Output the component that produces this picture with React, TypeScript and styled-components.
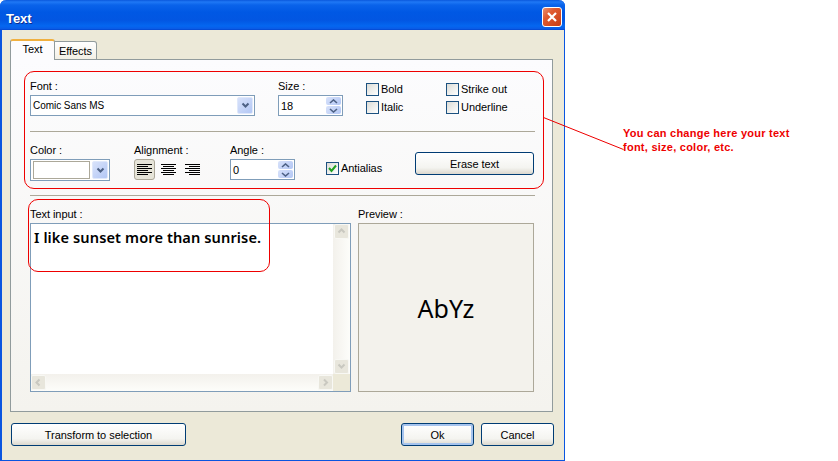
import React from 'react';
import styled, { createGlobalStyle } from 'styled-components';

const Global = createGlobalStyle`
  html, body { margin: 0; padding: 0; background: #fff; overflow: hidden; }
  body { font: 11px "Liberation Sans", Arial, sans-serif; color: #000; letter-spacing: -0.05px; }
`;

const Page = styled.div`
  position: relative;
  display: flex;
  width: 838px;
  height: 461px;
  overflow: hidden;
`;
const Win = styled.div`
  width: 565px;
  height: 461px;
  box-sizing: border-box;
  display: flex;
  flex-direction: column;
  background: #ece9d8;
  border-left: 2px solid #0a55e0;
  border-right: 1px solid #0a55e0;
  border-bottom: 1px solid #0a55e0;
  border-radius: 6px 6px 0 0;
  flex: none;
`;
const TitleBar = styled.div`
  height: 30px;
  margin: 0 -1px 0 -2px;
  flex: none;
  display: flex;
  align-items: center;
  justify-content: space-between;
  padding: 0 3px 0 6px;
  border-radius: 6px 6px 0 0;
  background: linear-gradient(180deg, #0a58dc 0, #1f78f5 2px, #0a63ea 5px, #0058e4 12px, #0256e2 20px, #0467f0 26px, #0a5ae6 29px, #0040c8 30px);
`;
const TitleText = styled.span`
  color: #fff;
  font: bold 13px "Liberation Sans", Arial, sans-serif;
  text-shadow: 1px 1px 0 #0a2c90;
  margin-top: 6px;
`;
const CloseBtn = styled.div`
  width: 20px;
  height: 20px;
  margin-top: 4px;
  box-sizing: border-box;
  border: 1px solid #fff;
  border-radius: 3px;
  background: linear-gradient(135deg, #ea9070 0, #df5a30 35%, #c83c14 100%);
  display: flex;
  align-items: center;
  justify-content: center;
`;
const Body = styled.div`
  flex: 1;
  display: flex;
  flex-direction: column;
  padding: 10px 10px 0 8px;
`;
const Tabs = styled.div`
  display: flex;
  align-items: flex-end;
  height: 20px;
  flex: none;
  position: relative;
  z-index: 1;
  margin-bottom: -1px;
`;
const ActiveTab = styled.div`
  width: 45px;
  height: 21px;
  box-sizing: border-box;
  border: 1px solid #919b9c;
  border-top: 2px solid #f0b040;
  border-bottom: none;
  border-radius: 3px 3px 0 0;
  background: #fcfcfe;
  text-align: center;
  padding-top: 2px;
  font-size: 11px;
`;
const IdleTab = styled.div`
  width: 42px;
  height: 19px;
  box-sizing: border-box;
  border: 1px solid #919b9c;
  border-left: none;
  border-radius: 0 3px 0 0;
  background: linear-gradient(180deg, #fff, #f3f0e6);
  text-align: center;
  padding-top: 3px;
  font-size: 11px;
`;
const Panel = styled.div`
  width: 543px;
  height: 353px;
  box-sizing: border-box;
  flex: none;
  border: 1px solid #919b9c;
  background: linear-gradient(180deg, #fcfcfe 0, #f4f3ee 100%);
  padding: 20px 18px 0 19px;
  display: flex;
  flex-direction: column;
`;
const TopRow = styled.div`
  display: flex;
  height: 51px;
  flex: none;
`;
const Field = styled.div<{ $w: number; $gap?: number }>`
  width: ${p => p.$w}px;
  margin-right: ${p => p.$gap ?? 0}px;
  flex: none;
  display: flex;
  flex-direction: column;
`;
const Label = styled.div`
  height: 15px;
  line-height: 13px;
  font-size: 11px;
`;
const Input = styled.div<{ $w: number; $h?: number }>`
  width: ${p => p.$w}px;
  height: ${p => p.$h ?? 21}px;
  box-sizing: border-box;
  border: 1px solid #7f9db9;
  background: #fff;
  display: flex;
  align-items: center;
  justify-content: space-between;
  padding: 1px 1px 1px 2px;
`;
const ComboText = styled.span`
  font-size: 10px;
`;
const DropBtn = styled.div<{ $w?: number }>`
  width: ${p => p.$w ?? 16}px;
  height: 100%;
  flex: none;
  border-radius: 2px;
  border: 1px solid #dfe8fb;
  box-sizing: border-box;
  background: linear-gradient(135deg, #d8e2fa, #b3c7f5);
  display: flex;
  align-items: center;
  justify-content: center;
`;
const Spin = styled.div`
  width: 15px;
  height: 100%;
  flex: none;
  display: flex;
  flex-direction: column;
  gap: 1px;
`;
const SpinPart = styled.div`
  flex: 1;
  border-radius: 2px;
  background: linear-gradient(135deg, #d8e2fa, #b3c7f5);
  display: flex;
  align-items: center;
  justify-content: center;
`;
const CheckGrid = styled.div`
  display: grid;
  grid-template-columns: 80px 80px;
  grid-auto-rows: 18px;
`;
const CheckRow = styled.div`
  display: flex;
  align-items: center;
  gap: 2px;
  height: 18px;
  font-size: 11px;
`;
const Box = styled.div`
  width: 13px;
  height: 13px;
  box-sizing: border-box;
  border: 1px solid #1c5180;
  background: linear-gradient(135deg, #dcdcd7, #fff);
  flex: none;
  display: flex;
  align-items: center;
  justify-content: center;
`;
const Rule = styled.div<{ $mb: number }>`
  height: 1px;
  width: 505px;
  background: #aca899;
  flex: none;
  margin-bottom: ${p => p.$mb}px;
`;
const MidRow = styled.div`
  display: flex;
  height: 51px;
  flex: none;
`;
const Swatch = styled.div`
  flex: 1;
  height: 100%;
  box-sizing: border-box;
  border: 1px solid #aca899;
  background: #fff;
  margin-right: 2px;
`;
const AlignRow = styled.div`
  display: flex;
  height: 21px;
`;
const AlignBtn = styled.div<{ $on?: boolean }>`
  width: 21px;
  height: 21px;
  margin-right: 3px;
  box-sizing: border-box;
  border-radius: 3px;
  border: 1px solid ${p => (p.$on ? '#aca899' : 'transparent')};
  background: ${p => (p.$on ? '#e6e4d8' : 'transparent')};
  display: flex;
  align-items: center;
  justify-content: center;
`;
const AntiCol = styled.div`
  padding-top: 15px;
  margin-right: 33px;
  width: 56px;
  flex: none;
`;
const PushBtn = styled.div<{ $w: number; $def?: boolean }>`
  width: ${p => p.$w}px;
  height: 23px;
  box-sizing: border-box;
  border: 1px solid #003c74;
  border-radius: 3px;
  flex: none;
  display: flex;
  align-items: center;
  justify-content: center;
  font-size: 11px;
  background: linear-gradient(180deg, #fff 0, #f4f4f0 70%, #dcd8ce 100%);
  box-shadow: ${p => (p.$def ? 'inset 0 0 0 2px #a6c4ee' : 'none')};
`;
const EraseCol = styled.div`
  padding-top: 8px;
`;
const BottomRow = styled.div`
  display: flex;
`;
const Memo = styled.div`
  width: 321px;
  height: 169px;
  box-sizing: border-box;
  border: 1px solid #7f9db9;
  background: #fff;
  display: grid;
  grid-template-columns: 1fr 17px;
  grid-template-rows: 1fr 17px;
  margin-right: 7px;
`;
const MemoText = styled.div`
  font: 600 14.6px/1 "Noto Sans", sans-serif;
  letter-spacing: 0.1px;
  padding: 6px 0 0 3px;
  white-space: nowrap;
  overflow: hidden;
`;
const VBar = styled.div`
  background: linear-gradient(90deg, #f3f1ec, #fdfdfa);
  display: flex;
  flex-direction: column;
  justify-content: space-between;
  align-items: center;
`;
const HBar = styled.div`
  background: linear-gradient(180deg, #f3f1ec, #fdfdfa);
  display: flex;
  justify-content: space-between;
  align-items: center;
`;
const Corner = styled.div`
  background: #ece9d8;
`;
const ScrollBtn = styled.div`
  width: 15px;
  height: 15px;
  box-sizing: border-box;
  border: 1px solid #f8f8f4;
  border-radius: 2px;
  background: #e8e6dc;
  display: flex;
  align-items: center;
  justify-content: center;
`;
const PreviewBox = styled.div`
  width: 176px;
  height: 169px;
  box-sizing: border-box;
  border: 1px solid #aca899;
  background: #f3f2ec;
  display: flex;
  align-items: center;
  justify-content: center;
  font: 25px "Noto Sans", sans-serif;
  letter-spacing: 0;
`;
const Footer = styled.div`
  display: flex;
  align-items: flex-start;
  padding: 11px 0 0 1px;
  width: 543px;
`;
const Spacer = styled.div`
  flex: 1;
`;
const Gap = styled.div`
  width: 7px;
`;
const Note = styled.div`
  color: #ee0000;
  font: bold 11px/14px "Liberation Sans", Arial, sans-serif;
  letter-spacing: 0.25px;
  padding: 126px 0 0 58px;
  white-space: nowrap;
`;
const Outline = styled.div<{ $x: number; $y: number; $w: number; $h: number }>`
  position: absolute;
  left: ${p => p.$x}px;
  top: ${p => p.$y}px;
  width: ${p => p.$w}px;
  height: ${p => p.$h}px;
  box-sizing: border-box;
  border: 1px solid #ee0000;
  border-radius: 10px;
  pointer-events: none;
`;
const Leader = styled.svg`
  position: absolute;
  left: 0;
  top: 0;
  pointer-events: none;
`;

const Chev = ({ dir = 'down', c = '#4d6185' }: { dir?: string; c?: string }) => {
  const d: Record<string, string> = {
    down: 'M1.5 2.5 L4.5 5.5 L7.5 2.5',
    up: 'M1.5 5.5 L4.5 2.5 L7.5 5.5',
    left: 'M5.5 1.5 L2.5 4.5 L5.5 7.5',
    right: 'M3 1.5 L6 4.5 L3 7.5',
  };
  return (
    <svg width="9" height="9" viewBox="0 0 9 9">
      <path d={d[dir]} fill="none" stroke={c} strokeWidth="2" />
    </svg>
  );
};

const Tiny = ({ dir }: { dir: 'up' | 'down' }) => (
  <svg width="9" height="5" viewBox="0 0 9 5">
    <path d={dir === 'up' ? 'M1 4 L4.5 1 L8 4' : 'M1 1 L4.5 4 L8 1'} fill="none" stroke="#4d6185" strokeWidth="1.6" />
  </svg>
);

const AlignIcon = ({ kind }: { kind: 'l' | 'c' | 'r' }) => {
  const rows = [15, 11, 15, 11, 15, 11];
  return (
    <svg width="15" height="11" viewBox="0 0 15 11">
      {rows.map((w, i) => {
        const x = kind === 'l' ? 0 : kind === 'c' ? (15 - w) / 2 : 15 - w;
        return <rect key={i} x={x} y={i * 2} width={w} height="1" fill="#000" />;
      })}
    </svg>
  );
};

const Check = ({ label, on }: { label: string; on?: boolean }) => (
  <CheckRow>
    <Box>
      {on && (
        <svg width="11" height="11" viewBox="0 0 11 11">
          <path d="M2 5 L4.5 8 L9 2.5" fill="none" stroke="#21a121" strokeWidth="2" />
        </svg>
      )}
    </Box>
    {label}
  </CheckRow>
);

const Spinner = ({ value, w }: { value: string; w: number }) => (
  <Input $w={w}>
    {value}
    <Spin>
      <SpinPart><Tiny dir="up" /></SpinPart>
      <SpinPart><Tiny dir="down" /></SpinPart>
    </Spin>
  </Input>
);

export default function App() {
  return (
    <Page>
      <Global />
      <Win>
        <TitleBar>
          <TitleText>Text</TitleText>
          <CloseBtn>
            <svg width="12" height="12" viewBox="0 0 12 12">
              <path d="M2 2 L10 10 M10 2 L2 10" stroke="#fff" strokeWidth="2.2" />
            </svg>
          </CloseBtn>
        </TitleBar>
        <Body>
          <Tabs>
            <ActiveTab>Text</ActiveTab>
            <IdleTab>Effects</IdleTab>
          </Tabs>
          <Panel>
            <TopRow>
              <Field $w={225} $gap={23}>
                <Label>Font :</Label>
                <Input $w={225}>
                  <ComboText>Comic Sans MS</ComboText>
                  <DropBtn><Chev /></DropBtn>
                </Input>
              </Field>
              <Field $w={65} $gap={23}>
                <Label>Size :</Label>
                <Spinner value="18" w={65} />
              </Field>
              <CheckGrid>
                <Check label="Bold" />
                <Check label="Strike out" />
                <Check label="Italic" />
                <Check label="Underline" />
              </CheckGrid>
            </TopRow>
            <Rule $mb={12} />
            <MidRow>
              <Field $w={80} $gap={24}>
                <Label>Color :</Label>
                <Input $w={80} $h={22}>
                  <Swatch />
                  <DropBtn $w={16}><Chev /></DropBtn>
                </Input>
              </Field>
              <Field $w={72} $gap={24}>
                <Label>Alignment :</Label>
                <AlignRow>
                  <AlignBtn $on><AlignIcon kind="l" /></AlignBtn>
                  <AlignBtn><AlignIcon kind="c" /></AlignBtn>
                  <AlignBtn><AlignIcon kind="r" /></AlignBtn>
                </AlignRow>
              </Field>
              <Field $w={65} $gap={31}>
                <Label>Angle :</Label>
                <Spinner value="0" w={65} />
              </Field>
              <AntiCol><Check label="Antialias" on /></AntiCol>
              <EraseCol><PushBtn $w={119}>Erase text</PushBtn></EraseCol>
            </MidRow>
            <Rule $mb={12} />
            <BottomRow>
              <Field $w={328}>
                <Label>Text input :</Label>
                <Memo>
                  <MemoText>I like sunset more than sunrise.</MemoText>
                  <VBar>
                    <ScrollBtn><Chev dir="up" c="#c9c8c0" /></ScrollBtn>
                    <ScrollBtn><Chev dir="down" c="#c9c8c0" /></ScrollBtn>
                  </VBar>
                  <HBar>
                    <ScrollBtn><Chev dir="left" c="#c9c8c0" /></ScrollBtn>
                    <ScrollBtn><Chev dir="right" c="#c9c8c0" /></ScrollBtn>
                  </HBar>
                  <Corner />
                </Memo>
              </Field>
              <Field $w={176}>
                <Label>Preview :</Label>
                <PreviewBox>AbYz</PreviewBox>
              </Field>
            </BottomRow>
          </Panel>
          <Footer>
            <PushBtn $w={175}>Transform to selection</PushBtn>
            <Spacer />
            <PushBtn $w={73} $def>Ok</PushBtn>
            <Gap />
            <PushBtn $w={73}>Cancel</PushBtn>
          </Footer>
        </Body>
      </Win>
      <Note>
        You can change here your text
        <br />
        font, size, color, etc.
      </Note>
      <Outline $x={24} $y={71} $w={520} $h={118} />
      <Outline $x={28} $y={199} $w={242} $h={73} />
      <Leader width="838" height="461">
        <path d="M543.5 117.5 L623.5 149.5" stroke="#ee0000" strokeWidth="1" fill="none" />
      </Leader>
    </Page>
  );
}
